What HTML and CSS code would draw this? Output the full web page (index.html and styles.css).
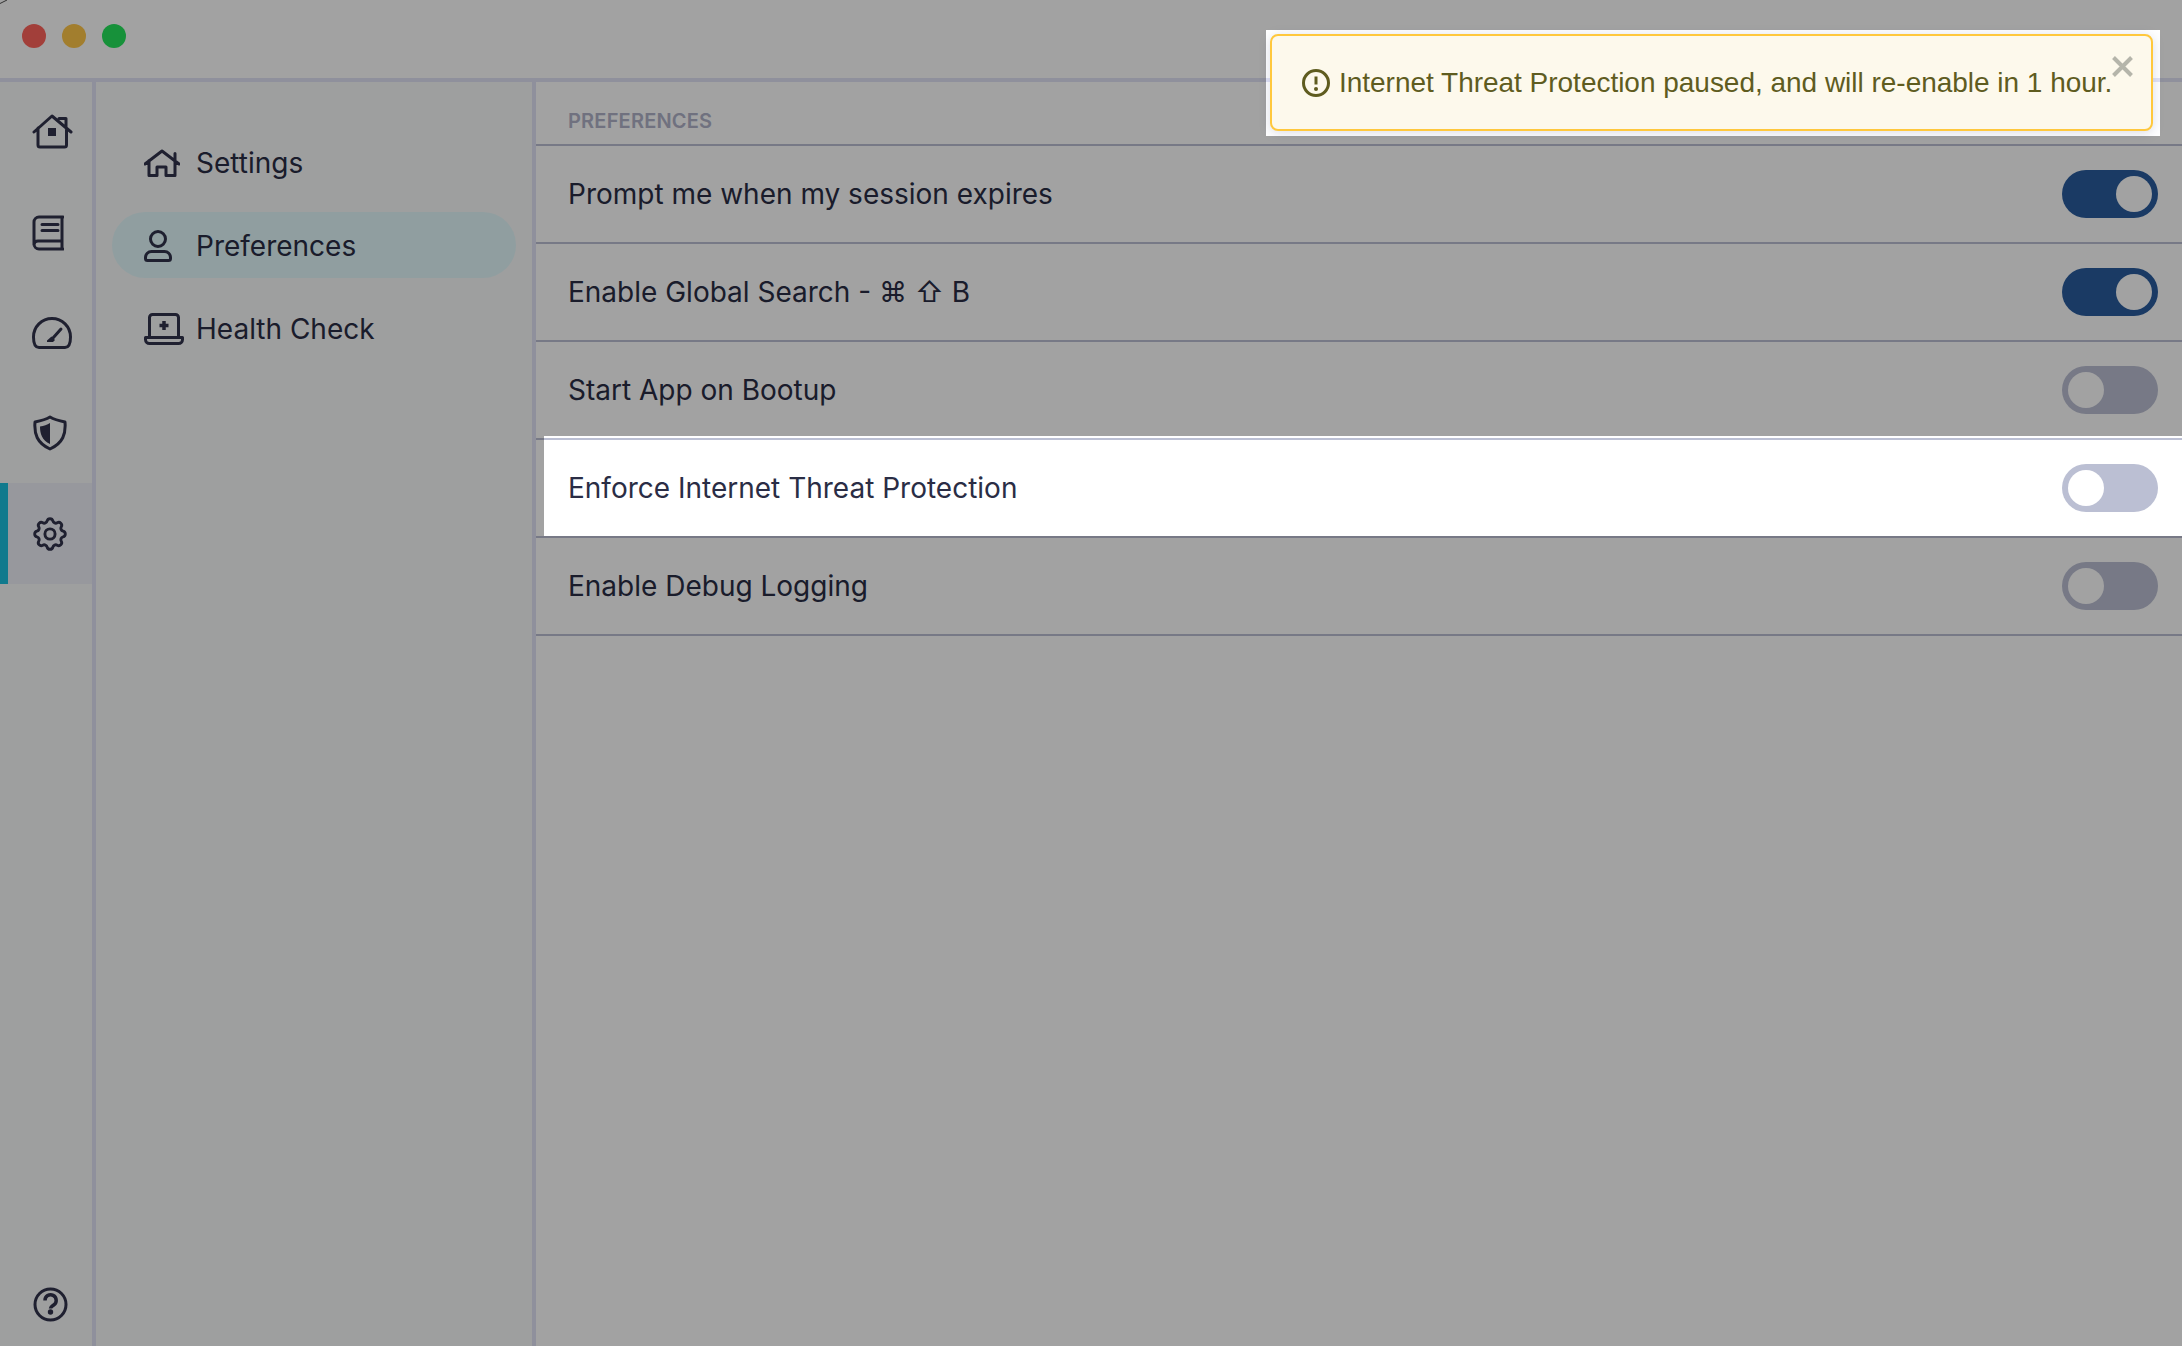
FILE: index.html
```html
<!DOCTYPE html>
<html lang="en">
<head>
<meta charset="utf-8">
<title>Preferences</title>
<link rel="stylesheet" href="styles.css">
</head>
<body>
<div class="app">
  <header class="titlebar">
    <span class="light light-red"></span>
    <span class="light light-yellow"></span>
    <span class="light light-green"></span>
  </header>
  <div class="body">
    <nav class="rail">
      <a class="rail-item rail-item-home">
        <svg class="ico" width="41" height="36" viewBox="0 0 41 36"><path d="M2 18 20 2l19 16M6 14v17a2 2 0 0 0 2 2h24.500a2 2 0 0 0 2-2V14M27 4.500h7V14"/><rect class="solid" x="16" y="14" width="8" height="8"/></svg>
      </a>
      <a class="rail-item">
        <svg class="ico" width="32" height="36" viewBox="0 0 32 36"><path d="M31 2H7a5 5 0 0 0-5 5v22a5 5 0 0 0 5 5h24M2 29.500a4 4 0 0 1 4-3.500h24V2M30 26v8M10 9.500h16M10 15.500h16"/></svg>
      </a>
      <a class="rail-item">
        <svg class="ico" width="40" height="32" viewBox="0 0 40 32"><path d="M7 30.500h26c3.500 0 5.500-4 5.500-10.500a18.500 18.500 0 0 0-37 0c0 6.500 2 10.500 5.500 10.500zM29 12l-8 9"/><path class="solid" d="M15 25v-1.500l4.500-4 3.500 3.500-2 2z"/></svg>
      </a>
      <a class="rail-item rail-item-shield">
        <svg class="ico" width="34" height="36" viewBox="0 0 34 36"><path d="M17 2c5 3 10 4 15 5 1 12-2 21-15 27C4 28 1 19 2 7c5-1 10-2 15-5z"/><path class="solid" d="M17 8c-3 2-6 3-10 3.500C7 19 9 25 17 29z"/></svg>
      </a>
      <a class="rail-item rail-item-active">
        <svg class="ico ico-gear" width="34" height="34" viewBox="2 2 20 20"><path d="M10.325 4.317c.426-1.756 2.924-1.756 3.350 0a1.724 1.724 0 0 0 2.573 1.066c1.543-.94 3.310.826 2.370 2.370a1.724 1.724 0 0 0 1.065 2.572c1.756.426 1.756 2.924 0 3.350a1.724 1.724 0 0 0-1.066 2.573c.94 1.543-.826 3.310-2.370 2.370a1.724 1.724 0 0 0-2.572 1.065c-.426 1.756-2.924 1.756-3.350 0a1.724 1.724 0 0 0-2.573-1.066c-1.543.94-3.310-.826-2.370-2.370a1.724 1.724 0 0 0-1.065-2.572c-1.756-.426-1.756-2.924 0-3.350a1.724 1.724 0 0 0 1.066-2.573c-.94-1.543.826-3.310 2.370-2.370.996.608 2.296.07 2.572-1.065z"/><circle cx="12" cy="12" r="3"/></svg>
      </a>
      <a class="rail-help">
        <svg class="ico" width="35" height="35" viewBox="0 0 35 35"><circle cx="17.500" cy="17.500" r="15.500"/><path class="thick" d="M12 13.500a5.600 5.600 0 1 1 8.700 4.500c-2 1.400-3.200 2-3.200 3.500"/><circle class="solid" cx="17.500" cy="25" r="2.700"/></svg>
      </a>
    </nav>
    <aside class="sidebar">
      <a class="nav-item">
        <span class="nav-icon"><svg class="ico" width="36" height="28" viewBox="0 0 36 28"><path d="M1 15 18 2l17 13M5 11.500V26.500h8V18h9v8.500h9V11.500M31 4.500v7"/></svg></span>
        Settings
      </a>
      <a class="nav-item nav-item-active">
        <span class="nav-icon"><svg class="ico" width="28" height="32" viewBox="0 0 28 32"><circle cx="14" cy="9" r="7.500"/><path d="M7.500 21.500h13a6 6 0 0 1 6 6v1a2 2 0 0 1-2 2h-21a2 2 0 0 1-2-2v-1a6 6 0 0 1 6-6z"/></svg></span>
        Preferences
      </a>
      <a class="nav-item">
        <span class="nav-icon"><svg class="ico" width="40" height="32" viewBox="0 0 40 32"><path d="M5.500 24.500V4.500a3 3 0 0 1 3-3h23a3 3 0 0 1 3 3v20M1.500 24.500h37v2a4 4 0 0 1-4 4h-29a4 4 0 0 1-4-4z"/><path class="thick" d="M20 8v9M15.500 12.500h9"/></svg></span>
        Health Check
      </a>
    </aside>
    <main class="main">
      <h2 class="section-title">PREFERENCES</h2>
      <div class="row"><span>Prompt me when my session expires</span><span class="toggle toggle-on"></span></div>
      <div class="row"><span>Enable Global Search - ⌘ ⇧ B</span><span class="toggle toggle-on"></span></div>
      <div class="row"><span>Start App on Bootup</span><span class="toggle"></span></div>
      <div class="row"><span>Enforce Internet Threat Protection</span><span class="toggle"></span></div>
      <div class="row"><span>Enable Debug Logging</span><span class="toggle"></span></div>
    </main>
  </div>
  <div class="toast">
    <svg class="toast-icon" width="28" height="28" viewBox="0 0 28 28"><circle cx="14" cy="14" r="12.500"/><path d="M14 7.500v8"/><circle class="toast-dot" cx="14" cy="20" r="2"/></svg>
    <span class="toast-text">Internet Threat Protection paused, and will re-enable in 1 hour.</span>
    <svg class="toast-close" width="21" height="21" viewBox="0 0 21 21"><path d="M1.500 1.500l18 18M19.500 1.500l-18 18"/></svg>
  </div>
  <svg class="spotlight" width="2182" height="1346" viewBox="0 0 2182 1346"><path fill-rule="evenodd" d="M0 0H2182V1346H0ZM1266 30H2160V136H1266ZM544 436H2182V536H544Z"/></svg>
  <svg class="corner" width="8" height="4" viewBox="0 0 8 4"><path d="M0 3.500 7 0"/></svg>
</div>
</body>
</html>
```
FILE: styles.css
```css
* { box-sizing: border-box; }
html, body { margin: 0; padding: 0; }
body { width: 2182px; height: 1346px; overflow: hidden; background: #fff; color: #2a2d45; font-family: Inter, "DejaVu Sans", sans-serif; }
.app { position: relative; display: flex; flex-direction: column; width: 2182px; height: 1346px; overflow: hidden; }
.titlebar { display: flex; align-items: center; gap: 16px; flex: none; height: 82px; padding: 0 0 6px 22px; background: #fff; border-bottom: 4px solid #e1e3f6; }
.light { width: 24px; height: 24px; border-radius: 50%; }
.light-red { background: #ff645c; }
.light-yellow { background: #ffc649; }
.light-green { background: #25e45c; }
.body { display: flex; flex: 1; min-height: 0; }
.rail { display: flex; flex-direction: column; flex: none; width: 96px; padding-top: 1px; background: #f9fafb; border-right: 4px solid #e1e3f6; }
.rail-item { display: flex; align-items: center; height: 100px; padding-left: 32px; }
.rail-item-home .ico { margin-bottom: 2px; }
.rail-item-shield { padding-left: 33px; }
.rail-item-active { height: 101px; padding-left: 25px; background: #eeeff7; border-left: 8px solid #1bc1de; }
.rail-help { display: flex; margin-top: auto; padding: 0 0 24px 33px; }
.ico { fill: none; stroke: #31334c; stroke-width: 3; stroke-linecap: round; stroke-linejoin: round; }
.ico .solid { fill: #31334c; stroke: none; }
.ico .thick { stroke-width: 3.500; stroke-linecap: butt; }
.ico-gear { stroke-width: 1.700; }
.sidebar { display: flex; flex-direction: column; gap: 17px; flex: none; width: 440px; padding: 47px 16px 0; background: #f9fafb; border-right: 4px solid #e1e3f6; }
.nav-item { display: flex; align-items: center; height: 66px; padding: 2px 0 0 32px; border-radius: 33px; font-size: 28px; color: #2a2d45; }
.nav-icon { display: flex; width: 52px; flex: none; }
.nav-item-active { background: #e3f9fc; }
.main { flex: 1; min-width: 0; background: #fff; }
.section-title { display: flex; align-items: center; height: 64px; margin: 0; padding: 16px 0 0 32px; font-size: 20px; font-weight: 600; letter-spacing: .2px; color: #b0b3c9; border-bottom: 2px solid #bbbfd3; }
.row { display: flex; align-items: center; justify-content: space-between; height: 98px; padding: 0 24px 0 32px; font-size: 28px; border-bottom: 2px solid #bbbfd3; }
.toggle { position: relative; flex: none; width: 96px; height: 48px; border-radius: 24px; background: #bbbfd3; }
.toggle::after { content: ""; position: absolute; top: 6px; left: 6px; width: 36px; height: 36px; border-radius: 50%; background: #fff; }
.toggle-on { background: #295c9e; }
.toggle-on::after { left: 54px; }
.toast { position: absolute; top: 34px; right: 29px; display: flex; align-items: center; gap: 9px; width: 883px; height: 97px; padding-left: 30px; background: #fdf9ec; border: 2px solid #ffc83d; border-radius: 8px; box-shadow: 0 2px 12px rgba(70, 80, 130, .2); color: #5f5c1f; font-family: "Liberation Sans", Arial, sans-serif; font-size: 28px; letter-spacing: -.02px; white-space: nowrap; }
.toast-icon { flex: none; fill: none; stroke: #5f5c1f; stroke-width: 3; }
.toast-dot { fill: #5f5c1f; stroke: none; }
.toast-close { position: absolute; top: 20px; right: 18px; fill: none; stroke: #b5b5aa; stroke-width: 4; }
.spotlight { position: absolute; top: 0; left: 0; fill: rgba(0, 0, 0, .365); pointer-events: none; }
.corner { position: absolute; top: 0; left: 0; fill: none; stroke: #333; stroke-width: 1; }
```
